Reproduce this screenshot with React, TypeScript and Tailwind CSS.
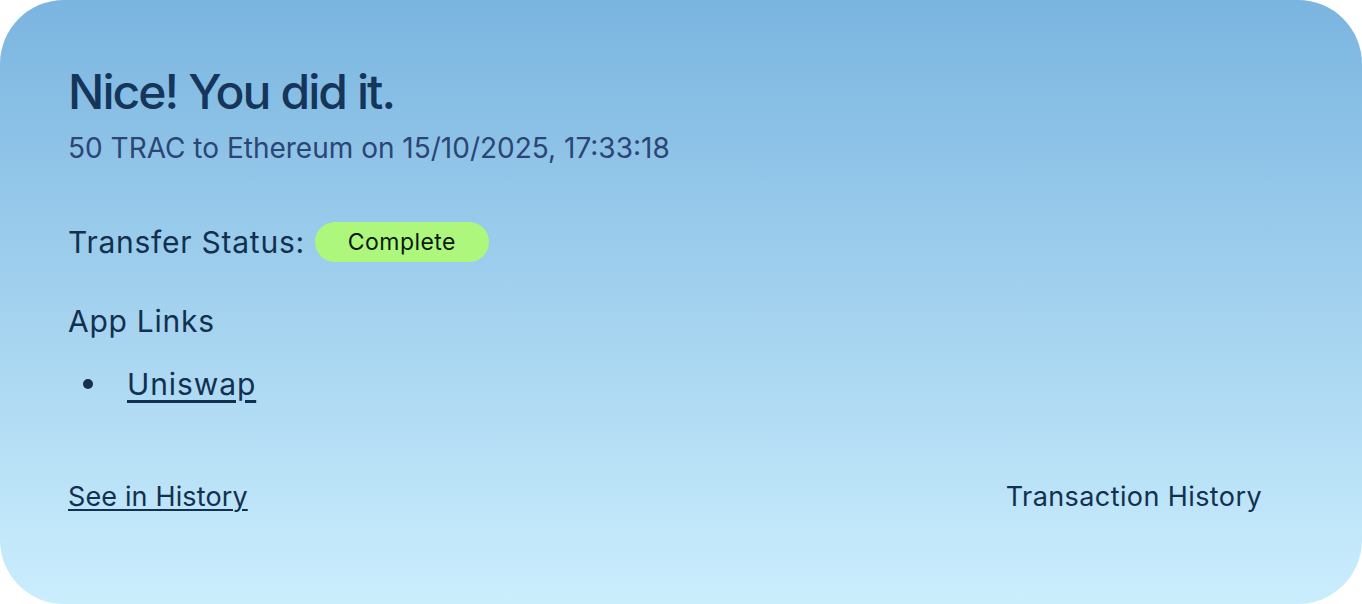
import type { ReactElement } from "react";

const font = { fontFamily: "Inter, 'Noto Sans', sans-serif" };

export default function App(): ReactElement {
	return (
		<div
			className="flex h-[604px] w-[1362px] flex-col rounded-[64px] bg-gradient-to-b from-[#7ab5e0] to-[#cbeefd] pl-[68px] pr-[100px] pt-[64px] text-[#12304f]"
			style={font}
		>
			<h1 className="text-[48px] leading-[56px] font-medium tracking-[-0.04em] text-[#15365a]">
				Nice! You did it.
			</h1>
			<p className="mt-[10px] text-[28px] leading-[36px] text-[#2b4574]">
				50 TRAC to Ethereum on 15/10/2025, 17:33:18
			</p>

			<div className="mt-[56px] flex items-center gap-[10px]">
				<span className="text-[30px] leading-[40px] tracking-[0.025em]">
					Transfer Status:
				</span>
				<span className="flex h-[40px] w-[174px] items-center justify-center rounded-full bg-[#adf77c] text-[23px] tracking-[0.02em] text-[#0a1a12]">
					Complete
				</span>
			</div>

			<h2 className="mt-[39px] text-[30px] leading-[40px] tracking-[0.025em]">
				App Links
			</h2>
			<ul className="mt-[23px]">
				<li className="flex items-center gap-[34px] pl-[15px] text-[30px] leading-[40px] tracking-[0.03em]">
					<span className="h-[10px] w-[10px] rounded-full bg-[#12304f]" />
					<a
						className="underline decoration-[2.5px] underline-offset-[5px]"
						href="#"
					>
						Uniswap
					</a>
				</li>
			</ul>

			<div className="mt-[75px] flex items-center justify-between text-[27px] leading-[36px]">
				<a
					className="underline decoration-2 underline-offset-[3px] tracking-[0.005em]"
					href="#"
				>
					See in History
				</a>
				<span className="tracking-[0.015em]">Transaction History</span>
			</div>
		</div>
	);
}
